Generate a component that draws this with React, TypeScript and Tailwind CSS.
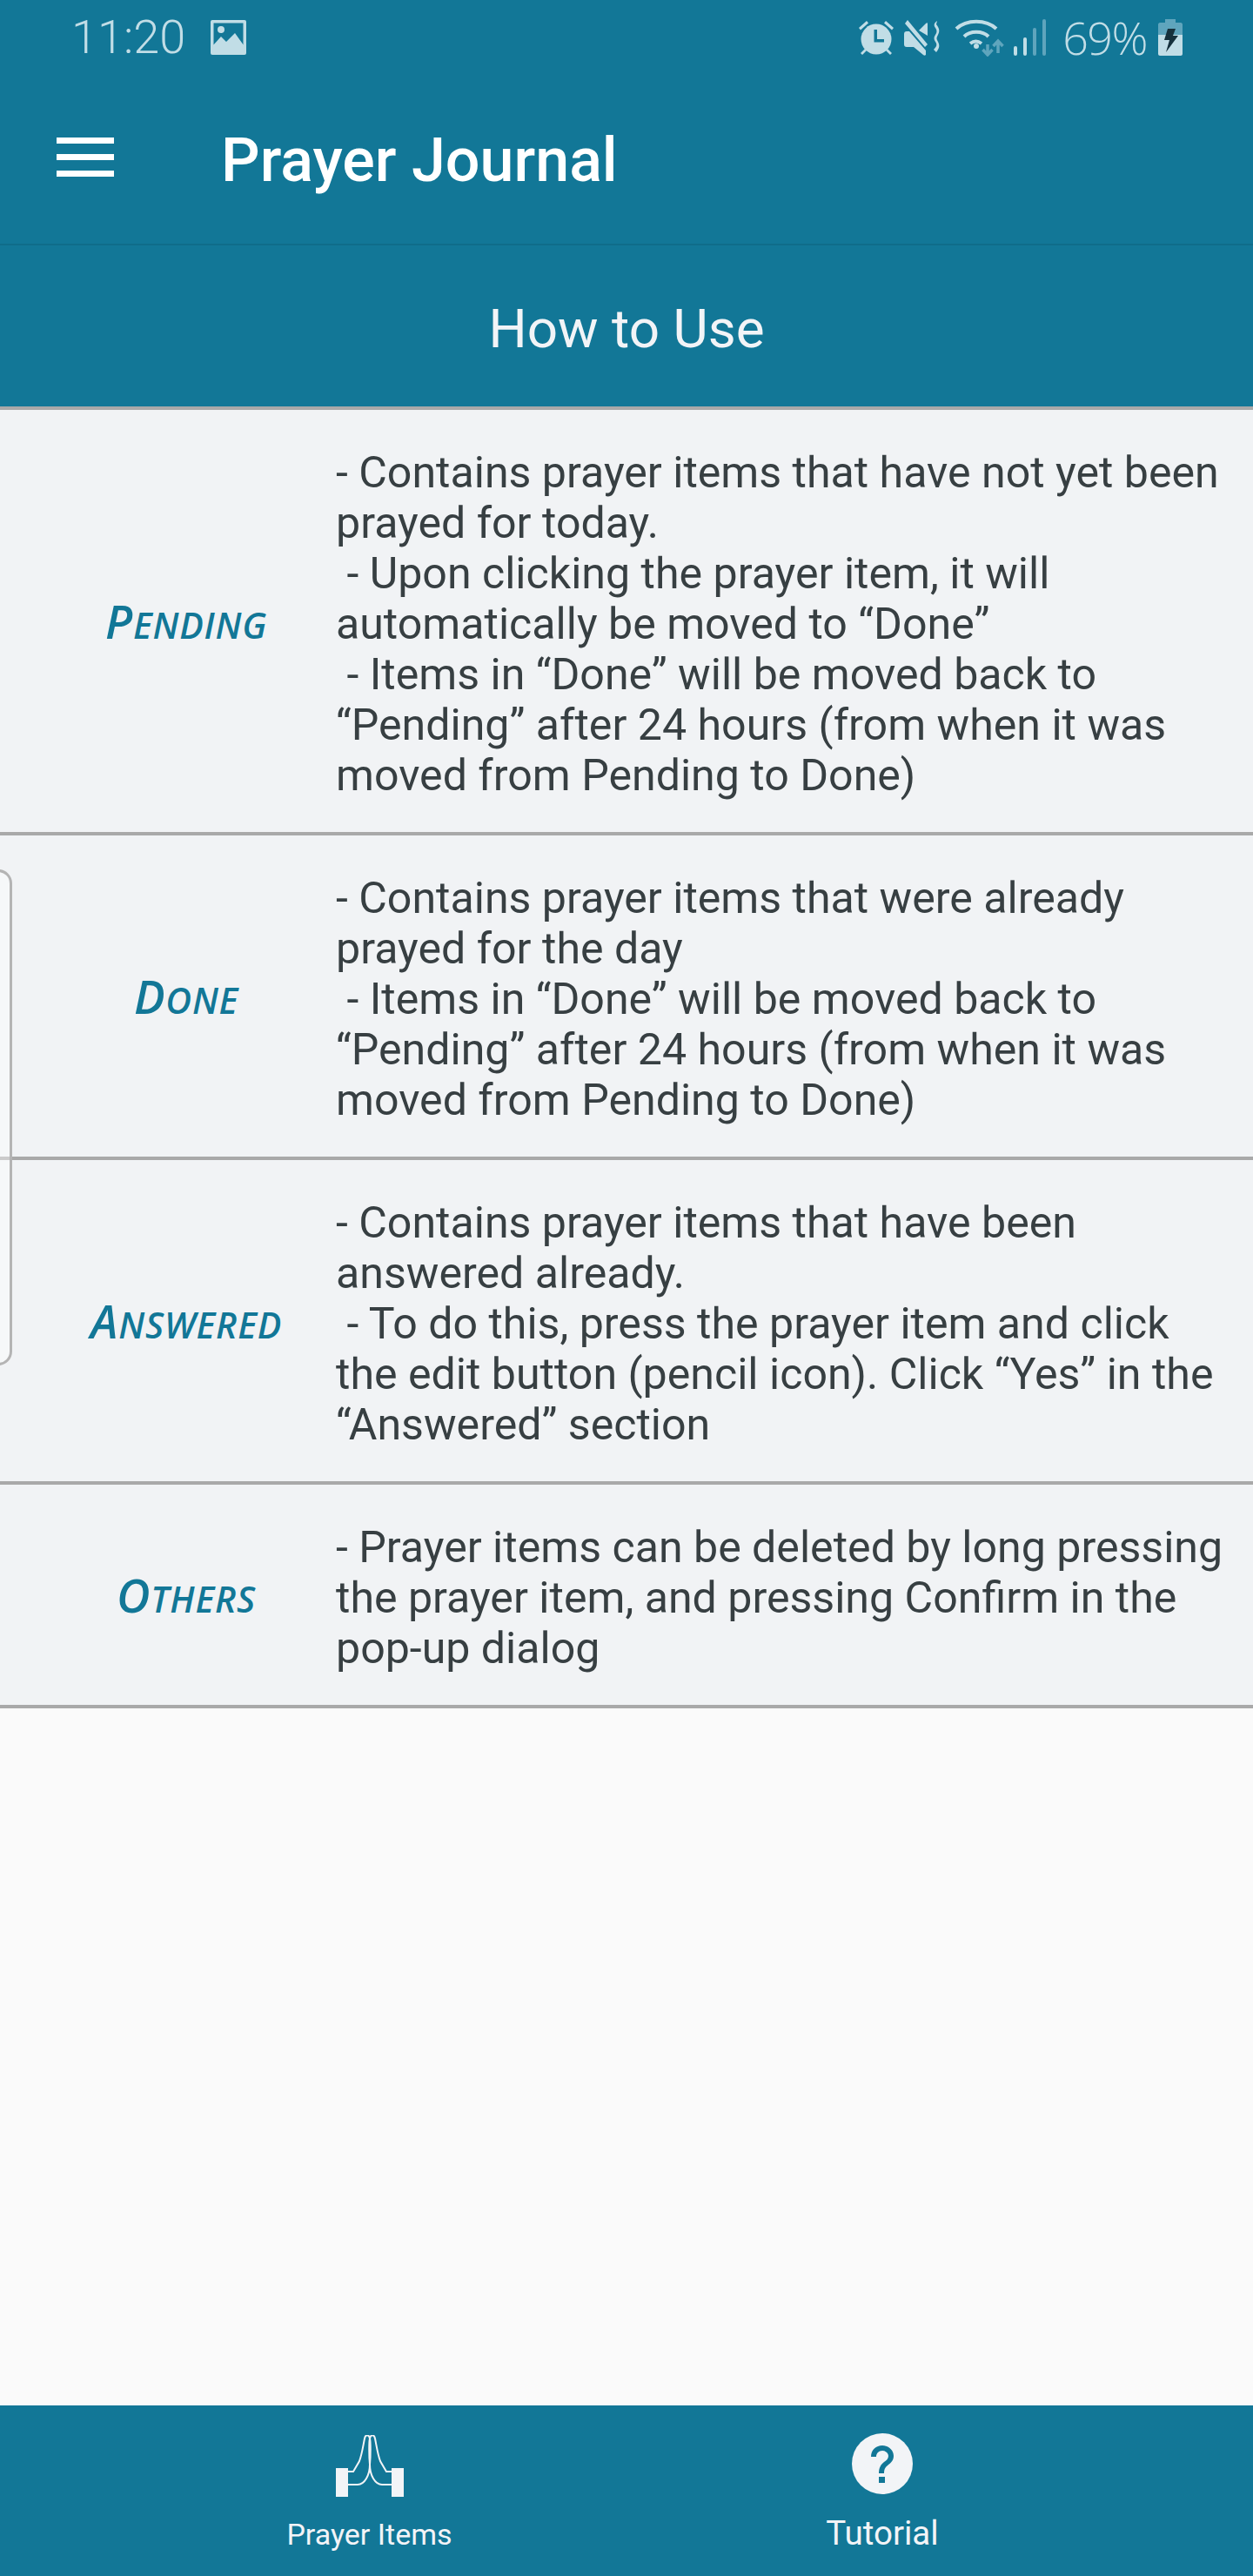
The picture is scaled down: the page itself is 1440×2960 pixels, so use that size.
import React from 'react';

interface Row {
  label: string;
  lines: string[];
}

const rows: Row[] = [
  {
    label: 'Pending',
    lines: [
      '- Contains prayer items that have not yet been',
      'prayed for today.',
      ' - Upon clicking the prayer item, it will',
      'automatically be moved to “Done”',
      ' - Items in “Done” will be moved back to',
      '“Pending” after 24 hours (from when it was',
      'moved from Pending to Done)',
    ],
  },
  {
    label: 'Done',
    lines: [
      '- Contains prayer items that were already',
      'prayed for the day',
      ' - Items in “Done” will be moved back to',
      '“Pending” after 24 hours (from when it was',
      'moved from Pending to Done)',
    ],
  },
  {
    label: 'Answered',
    lines: [
      '- Contains prayer items that have been',
      'answered already.',
      ' - To do this, press the prayer item and click',
      'the edit button (pencil icon). Click “Yes” in the',
      '“Answered” section',
    ],
  },
  {
    label: 'Others',
    lines: [
      '- Prayer items can be deleted by long pressing',
      'the prayer item, and pressing Confirm in the',
      'pop-up dialog',
    ],
  },
];

const StatusIcons = () => (
  <div className="flex items-center text-[#c1dde6]">
    {/* alarm */}
    <svg width="46" height="44" viewBox="0 0 46 44" className="mr-[8px]" fill="currentColor">
      <circle cx="23" cy="24" r="17.5" />
      <path d="M3 11 12 3l2 2.500-9 8zM43 11 34 3l-2 2.500 9 8zM5 40l5-5 2 2-5 5zM41 40l-5-5-2 2 5 5z" />
      <path d="M20.500 13h3.500v11h8v3.500H20.500z" fill="#127797" />
    </svg>
    {/* vibrate / mute */}
    <svg width="44" height="44" viewBox="0 0 44 44" className="mr-[15px]" fill="currentColor">
      <path d="M1 18c0-2 1-3 3-3h3l19 22v5c-1 1-2 1-3 0L12 33H4c-2 0-3-1-3-3z" />
      <path d="M2 6 5 2l23 28-3 3zM18 14l8-8c1-1 2-1 2 0v14z" />
      <path d="M39 3c-4 3-4 5-2 8s2 5 0 8-2 5 0 8 2 5-2 9l3 3c4-5 4-8 2-12s-2-4 0-8 2-7-2-12z" />
    </svg>
    {/* wifi */}
    <svg width="58" height="44" viewBox="0 0 58 44" className="mr-[10px]" fill="none" stroke="currentColor">
      <path d="M2 12c12-11 34-11 46 0" strokeWidth="4" />
      <path d="M11 21c7-7 21-7 28 0" strokeWidth="4" />
      <path d="M18 29c4-3 9-3 13 0" strokeWidth="4" />
      <circle cx="25" cy="32" r="3" fill="currentColor" stroke="none" />
      <path d="M38 30v12M32.500 36l5.500 6 5.500-6M50 40V26M44.500 32l5.500-6 5.500 6" strokeWidth="3.500" stroke="#5fa5bd" />
    </svg>
    {/* signal */}
    <svg width="38" height="42" viewBox="0 0 38 42" className="mr-[18px]">
      <rect x="0" y="31" width="4" height="11" rx="2" fill="#c1dde6" />
      <rect x="11" y="21" width="4" height="21" rx="2" fill="#c1dde6" />
      <rect x="22" y="10" width="4" height="32" rx="2" fill="#5fa5bd" />
      <rect x="33" y="0" width="4" height="42" rx="2" fill="#5fa5bd" />
    </svg>
    <span className="mr-[13px] font-['Open_Sans'] text-[52px] leading-none font-light tracking-[-1.500px]">69%</span>
    {/* battery */}
    <svg width="28" height="42" viewBox="0 0 28 42">
      <path d="M8 0h12v4h6c1 0 2 1 2 2v12H0V6c0-1 1-2 2-2h6z" fill="#5fa5bd" />
      <path d="M0 18h28v22c0 1-1 2-2 2H2c-1 0-2-1-2-2z" fill="#c1dde6" />
      <path d="M11 11h9l-3 8h6L9 38l4-14H7z" fill="#16313c" />
    </svg>
  </div>
);

const PrayerHands = () => (
  <svg width="78" height="71" viewBox="0 0 78 71" fill="none">
    <rect x="0" y="38" width="14" height="33" fill="#f2f4f7" />
    <rect x="64" y="38" width="14" height="33" fill="#f2f4f7" />
    <path
      d="M14 42h6l7-12c3-8 4-16 6-26 1-5 5-5 6 0 1-5 5-5 6 0 2 10 3 18 6 26l7 12h6M39 4c-1 3-1 20 0 30 0 12-6 23-14 23H14M39 4c1 3 1 20 0 30 0 12 6 23 14 23h11"
      stroke="#f2f4f7"
      strokeWidth="2"
    />
  </svg>
);

const HelpCircle = () => (
  <svg width="70" height="70" viewBox="0 0 70 70">
    <circle cx="35" cy="35" r="35" fill="#f2f4f7" />
    <path
      d="M22 27c0-8 6-13 13-13s13 5 13 12c0 5-3 8-7 11-3 2-4 5-4 9h-6c0-6 2-10 6-13 3-2 5-4 5-7s-3-6-7-6-7 3-7 7z"
      fill="#127797"
    />
    <rect x="31" y="50" width="7" height="7" fill="#127797" />
  </svg>
);

export default function App() {
  return (
    <div className="relative flex h-[2960px] w-[1440px] flex-col overflow-hidden bg-[#fafafa] font-['Roboto',sans-serif]">
      <div className="bg-[#127797]">
        <div className="flex h-[86px] items-center justify-between pr-[81px] pl-[82px]">
          <div className="flex items-center gap-[29px] text-[#c1dde6]">
            <span className="text-[54px] leading-none font-light">11:20</span>
            <svg width="41" height="40" viewBox="0 0 41 40">
              <rect width="41" height="40" rx="2" fill="#c1dde6" />
              <rect x="3.500" y="3.500" width="34" height="25" fill="#127797" />
              <circle cx="12" cy="11" r="4" fill="#c1dde6" />
              <path d="M3 29l9-10 6 6 10-10 10 14v3H3z" fill="#c1dde6" />
            </svg>
          </div>
          <StatusIcons />
        </div>
        <div className="flex h-[194px] items-center pb-[5px] pl-[65px]">
          <div className="flex w-[66px] flex-col gap-[12px]">
            <div className="h-[7px] bg-white" />
            <div className="h-[7px] bg-white" />
            <div className="h-[7px] bg-white" />
          </div>
          <h1 className="mt-[6px] ml-[123px] text-[70px] leading-none font-medium text-white">Prayer Journal</h1>
        </div>
      </div>
      <div className="flex h-[187px] items-center justify-center border-t-2 border-[#0f6c8a] bg-[#127797] pt-[6px] text-[62px] leading-none text-[#f2f4f7]">
        How to Use
      </div>
      <div className="border-t-4 border-[#a9a9a9]">
        {rows.map((row) => (
          <div key={row.label} className="flex items-center border-b-4 border-[#a9a9a9] bg-[#f1f3f5] pt-[43px] pb-[36px]">
            <div className="mb-[8px] w-[386px] pl-[42px] text-center font-['Open_Sans'] text-[41px] leading-none font-semibold tracking-[0.800px] text-[#127797] uppercase italic first-letter:text-[53px]">
              {row.label}
            </div>
            <div className="text-[50.100px] leading-[58px] whitespace-pre text-[#373f42]">
              {row.lines.map((line) => (
                <div key={line}>{line}</div>
              ))}
            </div>
          </div>
        ))}
      </div>
      <div className="flex-1" />
      <div className="flex h-[196px] bg-[#127797]">
        <div className="flex w-[850px] flex-col items-center pt-[34px] pr-[1px]">
          <PrayerHands />
          <span className="mt-[23px] text-[34px] leading-[40px] text-[#f2f4f7]">Prayer Items</span>
        </div>
        <div className="flex w-[328px] flex-col items-center pt-[32px]">
          <HelpCircle />
          <span className="mt-[23px] text-[38.500px] leading-[44px] text-[#f2f4f7]">Tutorial</span>
        </div>
      </div>
      {/* edge of the drawer handle lying over the rows */}
      <div className="absolute top-[999px] -left-[20px] h-[570px] w-[34px] rounded-[16px] border-[3px] border-[#b4b4b4] bg-white/40" />
    </div>
  );
}
